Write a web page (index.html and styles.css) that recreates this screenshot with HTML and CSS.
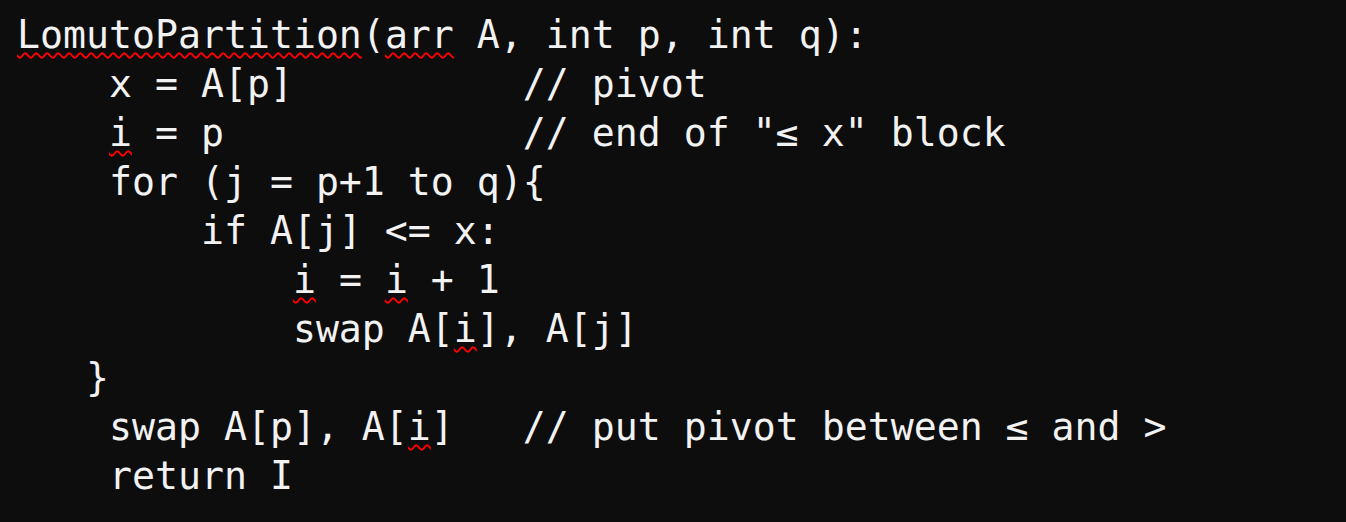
FILE: index.html
```html
<!DOCTYPE html>
<html>
<head>
<meta charset="utf-8">
<link rel="stylesheet" href="styles.css">
</head>
<body>
<div class="code">
<div class="line"><span class="sp">LomutoPartition</span>(<span class="sp">arr</span> A, int p, int q):</div>
<div class="line">    x = A[p]          // pivot</div>
<div class="line">    <span class="sp">i</span> = p             // end of "≤ x" block</div>
<div class="line">    for (j = p+1 to q){</div>
<div class="line">        if A[j] &lt;= x:</div>
<div class="line">            <span class="sp">i</span> = <span class="sp">i</span> + 1</div>
<div class="line">            swap A[<span class="sp">i</span>], A[j]</div>
<div class="line">   }</div>
<div class="line">    swap A[p], A[<span class="sp">i</span>]   // put pivot between ≤ and &gt;</div>
<div class="line">    return I</div>
</div>
</body>
</html>
```
FILE: styles.css
```css
html, body {
  margin: 0;
  padding: 0;
  background: #0d0d0d;
  height: 100%;
}
.code {
  padding: 11px 0 0 17px;
  font-family: "DejaVu Sans Mono", "Liberation Mono", monospace;
  font-size: 38.2px;
  line-height: 49px;
  color: #f2f2f2;
}
.line {
  white-space: pre;
}
.sp {
  text-decoration-line: underline;
  text-decoration-style: wavy;
  text-decoration-color: #ff0000;
  text-decoration-thickness: 1.5px;
  text-underline-offset: 4px;
}
```
